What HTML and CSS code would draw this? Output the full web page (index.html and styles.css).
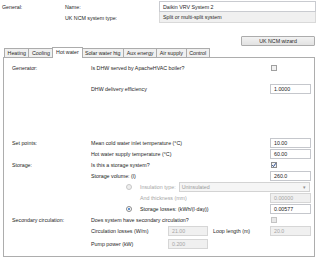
FILE: index.html
```html
<!DOCTYPE html>
<html>
<head>
<meta charset="utf-8">
<link rel="stylesheet" href="styles.css">
</head>
<body>
<div class="page">
  <div class="hdr">
    <div class="hrow"><span>General:</span><span>Name:</span><div class="box name">Daikin VRV System 2</div></div>
    <div class="hrow"><span></span><span>UK NCM system type:</span><div class="box ro">Split or multi-split system</div></div>
  </div>
  <div class="btnrow"><div class="wiz">UK NCM wizard</div></div>
  <div class="tabs">
    <div class="tab">Heating</div>
    <div class="tab">Cooling</div>
    <div class="tab active">Hot water</div>
    <div class="tab">Solar water htg</div>
    <div class="tab">Aux energy</div>
    <div class="tab">Air supply</div>
    <div class="tab">Control</div>
  </div>
  <div class="panel">
    <div class="row gen"><span>Generator:</span><span>Is DHW served by ApacheHVAC boiler?</span><span class="cb"></span></div>
    <div class="row eff"><span></span><span>DHW delivery efficiency</span><div class="inp">1.0000</div></div>
    <div class="row setp"><span>Set points:</span><span>Mean cold water inlet temperature (°C)</span><div class="inp">10.00</div></div>
    <div class="row"><span></span><span>Hot water supply temperature (°C)</span><div class="inp">60.00</div></div>
    <div class="row"><span>Storage:</span><span>Is this a storage system?</span><span class="cb on"><svg viewBox="0 0 6 6" width="6" height="6"><path d="M1.2 3.2 L2.5 4.5 L4.9 1.2" fill="none" stroke="#27498f" stroke-width="1"/></svg></span></div>
    <div class="row"><span></span><span class="dk">Storage volume: (l)</span><div class="inp">260.0</div></div>
    <div class="row"><span></span><div class="sub wide"><span class="rad"></span><span class="dis lbl">Insulation type:</span><div class="sel">Uninsulated<span class="arr">▾</span></div></div></div>
    <div class="row"><span></span><div class="sub"><span class="radsp"></span><span class="dis">And thickness (mm)</span></div><div class="inp off">0.00000</div></div>
    <div class="row"><span></span><div class="sub"><span class="rad on"></span><span class="dk">Storage losses: (kWh/(l·day))</span></div><div class="inp">0.00577</div></div>
    <div class="row"><span>Secondary circulation:</span><span>Does system have secondary circulation?</span><span class="cb off"></span></div>
    <div class="row"><span></span><div class="circ"><span class="clbl">Circulation losses (W/m)</span><div class="inp off sm">21.00</div><span class="loop">Loop length (m)</span></div><div class="inp off">20.0</div></div>
    <div class="row pump"><span></span><div class="circ"><span class="clbl">Pump power (kW)</span><div class="inp off sm">0.200</div></div><span></span></div>
  </div>
</div>
</body>
</html>
```
FILE: styles.css
```css
html, body {
  margin: 0;
  padding: 0;
  background: #ffffff;
}
body {
  font-family: "Liberation Sans", Arial, sans-serif;
  font-size: 5.3px;
  color: #262626;
  width: 318px;
  height: 259px;
  overflow: hidden;
}
.page {
  width: 318px;
}
.hdr {
  padding: 1px 2px 0 2px;
}
.hrow {
  display: grid;
  grid-template-columns: 63px 94px 157px;
  height: 11px;
  align-items: center;
}
.box {
  height: 11px;
  box-sizing: border-box;
  padding-left: 3px;
  display: flex;
  align-items: center;
}
.box.name {
  border: 1px solid #c9cbd0;
  background: #fff;
}
.box.ro {
  border: 1px solid #d9d9d9;
  border-top: none;
  background: #f0f0f0;
}
.btnrow {
  display: flex;
  justify-content: flex-end;
  padding: 13px 3px 0 0;
}
.wiz {
  width: 74px;
  height: 10px;
  box-sizing: border-box;
  border: 1px solid #acacac;
  border-radius: 1px;
  background: linear-gradient(#f2f2f2, #e2e2e2);
  display: flex;
  align-items: center;
  justify-content: center;
}
.tabs {
  display: flex;
  align-items: flex-end;
  padding: 1px 0 0 4px;
  height: 10px;
  box-sizing: content-box;
}
.tab {
  position: relative;
  height: 9px;
  box-sizing: border-box;
  border: 1px solid #acacac;
  border-bottom: none;
  background: #f0f0f0;
  padding: 0 2.6px;
  margin-left: -1px;
  display: flex;
  align-items: center;
}
.tab:first-child {
  margin-left: 0;
}
.tab.active {
  height: 11px;
  margin-bottom: -1px;
  background: #fff;
  z-index: 2;
  padding: 0 3.5px;
  margin-left: -2px;
  margin-right: -1px;
  align-items: flex-start;
  padding-top: 1px;
}
.panel {
  margin: 0 3px;
  height: 200px;
  box-sizing: border-box;
  border: 1px solid #adadad;
  background: #fff;
  padding: 5px 0 0 8px;
}
.row {
  display: grid;
  grid-template-columns: 79px 179px 41px;
  height: 10px;
  align-items: center;
  margin-top: 1px;
}
.row.gen { margin-top: 0; }
.row.eff { margin-top: 11px; }
.row.setp { margin-top: 44px; }
.row.pump { margin-top: 3px; }
.cb {
  width: 6px;
  height: 6px;
  box-sizing: border-box;
  border: 1px solid #a0a0a0;
  background: #f1f1f1;
  margin-left: 1px;
  display: block;
}
.cb.on {
  border-color: #8e8e8e;
  background: #f4f4f4;
}
.cb svg {
  display: block;
  margin: -1px;
}
.cb.off {
  border-color: #c4c4c4;
  background: #e8e8e8;
}
.inp {
  height: 10px;
  box-sizing: border-box;
  border: 1px solid #c5c7cc;
  background: #fff;
  padding-left: 3px;
  display: flex;
  align-items: center;
  color: #222;
}
.inp.off {
  background: #f0f0f0;
  border-color: #d6d6d6;
  color: #a5a5a5;
}
.inp.sm {
  width: 40px;
}
.sub {
  display: flex;
  align-items: center;
  padding-left: 35px;
}
.sub.wide {
  grid-column: 2 / 4;
  padding-right: 1px;
}
.rad, .radsp {
  width: 6px;
  height: 6px;
  margin-right: 8px;
  flex: none;
}
.rad {
  box-sizing: border-box;
  border: 1px solid #c8c8c8;
  border-radius: 50%;
  background: #eeeeee;
  position: relative;
}
.rad.on {
  border-color: #8a8a8a;
  background: #fff;
}
.rad.on::after {
  content: "";
  position: absolute;
  left: 1px;
  top: 1px;
  width: 2px;
  height: 2px;
  border-radius: 50%;
  background: #2b6fc2;
}
.dis {
  color: #a5a5a5;
}
.dk {
  color: #1a1a1a;
}
.lbl {
  white-space: nowrap;
  margin-right: 3px;
  flex: none;
}
.sel {
  flex: 1;
  height: 10px;
  box-sizing: border-box;
  border: 1px solid #d3d3d3;
  background: #f5f5f5;
  color: #9a9a9a;
  padding-left: 2px;
  display: flex;
  align-items: center;
  justify-content: space-between;
}
.arr {
  font-size: 5px;
  padding-right: 3px;
  color: #909090;
}
.circ {
  display: flex;
  align-items: center;
}
.clbl {
  width: 77px;
  flex: none;
}
.loop {
  margin-left: 5px;
}
```
